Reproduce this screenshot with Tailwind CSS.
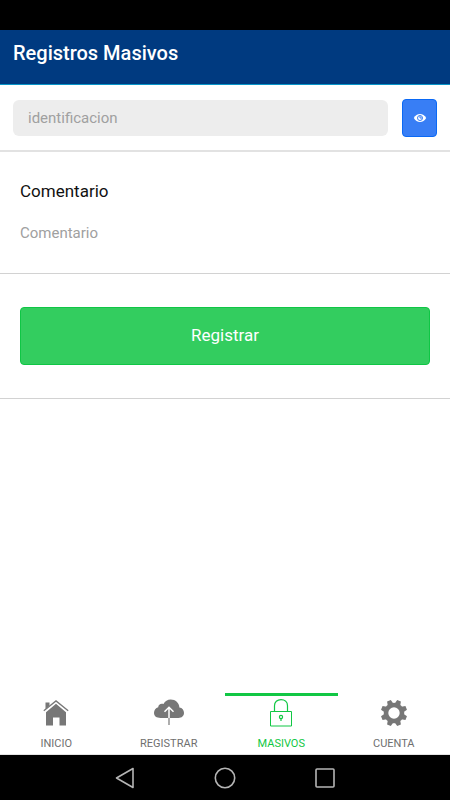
<!DOCTYPE html>
<html lang="es">
<head>
<meta charset="utf-8">
<meta name="viewport" content="width=device-width, initial-scale=1">
<title>Registros Masivos</title>
<script src="https://cdn.jsdelivr.net/npm/@tailwindcss/browser@4"></script>
</head>
<body class="flex min-h-screen flex-col bg-white font-[Roboto,sans-serif] text-[#222]">
  <div class="h-[30px] bg-black"></div>
  <header class="flex h-[55px] items-center border-b border-[#0795c8] bg-[#003a80] px-[13px] pb-2">
    <h1 class="text-xl font-medium text-white">Registros Masivos</h1>
  </header>

  <main class="grow">
    <form>
      <div class="flex items-center gap-[14px] border-b-2 border-[#e2e2e2] px-[13px] pt-[14px] pb-[13px]">
        <input type="text" aria-label="identificacion" placeholder="identificacion" class="h-9 min-w-0 grow rounded-md bg-[#ededed] px-[15px] text-[15px] outline-none placeholder:text-[#a0a0a0]">
        <button type="button" aria-label="Ver" class="flex h-[38px] w-[35px] items-center justify-center rounded border border-[#0a69f5] bg-[#387ef5]">
          <svg width="14" height="10" viewBox="0 0 14 10" aria-hidden="true">
            <path d="M.8 5C3.500-.2 10.500-.2 13.200 5C10.500 10.200 3.500 10.200 .8 5Z" fill="#fff"/>
            <circle cx="7" cy="5" r="2.500" fill="#fff" stroke="#387ef5" stroke-width="1"/>
            <path d="M7 3V5H9" fill="none" stroke="#387ef5" stroke-width="1"/>
          </svg>
        </button>
      </div>

      <div class="flex flex-col border-b border-[#d2d2d2] px-5 pt-[27px] pb-[30px]">
        <label for="comentario" class="mb-5 text-[17px] leading-6 text-[#111]">Comentario</label>
        <input id="comentario" type="text" placeholder="Comentario" class="h-5 w-full bg-transparent text-[15px] outline-none placeholder:text-[#a0a0a0]">
      </div>

      <div class="border-b border-[#d2d2d2] px-5 py-[33px]">
        <button type="submit" class="h-[58px] w-full rounded border border-[#0fc645] bg-[#33cd5f] text-[17px] text-white">Registrar</button>
      </div>
    </form>
  </main>

  <nav class="grid h-[62px] grid-cols-4 border-b border-[#e4e4e4] text-[11px] leading-4 text-[#6f6f6f]">
    <a href="#inicio" class="flex flex-col items-center justify-between border-t-3 border-transparent pt-[3px] pb-[2px]">
      <svg width="28" height="28" viewBox="0 0 28 28" aria-hidden="true">
        <path d="M3.500 3.500H7.500V6.500L3.500 10Z" fill="#777"/>
        <path d="M4 13.200L14 4.800L24 13.200V26.500H17.500V18.500H11V26.500H4Z" fill="#777"/>
        <path d="M1.800 11.700L14 1.900L26.200 11.700" fill="none" stroke="#777" stroke-width="1.300"/>
      </svg>
      <span>INICIO</span>
    </a>
    <a href="#registrar" class="flex flex-col items-center justify-between border-t-3 border-transparent pt-[3px] pb-[2px]">
      <svg width="30" height="28" viewBox="0 0 30 28" aria-hidden="true">
        <path d="M6.500 19C2.700 19 0 17.200 0 13.800C0 11 1.700 8.800 4.200 8.200C4.300 5.400 7 4 9.500 5C11 2.200 13.500 .5 16.700 .5C21.500 .5 25.200 3.900 25.400 8.400C28.200 8.800 30 11 30 13.800C30 17 27.700 19 24.500 19Z" fill="#777"/>
        <path d="M10.500 12.800L15 8.200L19.500 12.800M15 8.500V19" fill="none" stroke="#fff" stroke-width="1.500"/>
        <path d="M15 19V26" stroke="#777" stroke-width="1.200"/>
      </svg>
      <span>REGISTRAR</span>
    </a>
    <a href="#masivos" aria-current="page" class="flex flex-col items-center justify-between border-t-3 border-[#11c744] pt-[3px] pb-[2px] text-[#11c744]">
      <svg width="24" height="28" viewBox="0 0 24 28" aria-hidden="true" fill="none" stroke="#11c744">
        <path d="M1.500 12.500H22.500V27H1.500Z" stroke-width="1"/>
        <path d="M5.500 12.500V6.700C5.500 3 8.200 .6 12 .6S18.500 3 18.500 6.700V12.500" stroke-width="1.200"/>
        <circle cx="12" cy="18" r="1.600" stroke-width="1.200"/>
        <path d="M12 19.500V22" stroke-width="1.200"/>
      </svg>
      <span>MASIVOS</span>
    </a>
    <a href="#cuenta" class="flex flex-col items-center justify-between border-t-3 border-transparent pt-[3px] pb-[2px]">
      <svg width="28" height="28" viewBox="-14 -14 28 28" aria-hidden="true">
        <circle r="8" fill="none" stroke="#777" stroke-width="4.600"/>
        <g fill="#777">
          <path d="M-3-9L-2-13.200H2L3-9Z" transform="rotate(22.500)"/>
          <path d="M-3-9L-2-13.200H2L3-9Z" transform="rotate(67.500)"/>
          <path d="M-3-9L-2-13.200H2L3-9Z" transform="rotate(112.500)"/>
          <path d="M-3-9L-2-13.200H2L3-9Z" transform="rotate(157.500)"/>
          <path d="M-3-9L-2-13.200H2L3-9Z" transform="rotate(202.500)"/>
          <path d="M-3-9L-2-13.200H2L3-9Z" transform="rotate(247.500)"/>
          <path d="M-3-9L-2-13.200H2L3-9Z" transform="rotate(292.500)"/>
          <path d="M-3-9L-2-13.200H2L3-9Z" transform="rotate(337.500)"/>
        </g>
      </svg>
      <span>CUENTA</span>
    </a>
  </nav>

  <div class="flex h-[45px] items-center justify-center gap-[78px] bg-black">
    <button type="button" aria-label="Atrás">
      <svg class="block" width="22" height="22" viewBox="0 0 22 22" fill="none" stroke="#b5b5b5" stroke-width="1.600" stroke-linejoin="round" aria-hidden="true"><path d="M19 1.500V20.500L2.500 11Z"/></svg>
    </button>
    <button type="button" aria-label="Inicio">
      <svg class="block" width="22" height="22" viewBox="0 0 22 22" fill="none" stroke="#b5b5b5" stroke-width="1.600" aria-hidden="true"><circle cx="11" cy="11" r="9.700"/></svg>
    </button>
    <button type="button" aria-label="Recientes">
      <svg class="block" width="22" height="22" viewBox="0 0 22 22" fill="none" stroke="#b5b5b5" stroke-width="1.600" aria-hidden="true"><rect x="2" y="2" width="18" height="18" rx="1"/></svg>
    </button>
  </div>
</body>
</html>
